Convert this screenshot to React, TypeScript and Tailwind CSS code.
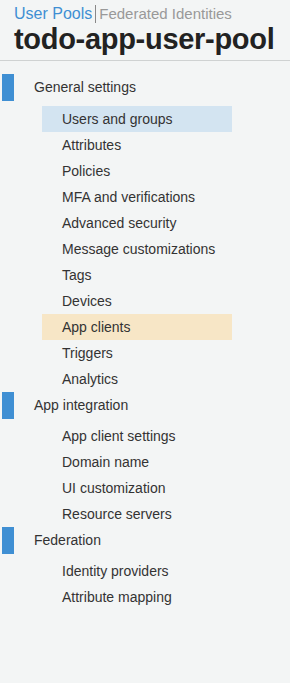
const sections = [
  {
    title: "General settings",
    items: [
      "Users and groups",
      "Attributes",
      "Policies",
      "MFA and verifications",
      "Advanced security",
      "Message customizations",
      "Tags",
      "Devices",
      "App clients",
      "Triggers",
      "Analytics",
    ],
  },
  {
    title: "App integration",
    items: ["App client settings", "Domain name", "UI customization", "Resource servers"],
  },
  {
    title: "Federation",
    items: ["Identity providers", "Attribute mapping"],
  },
]

function itemClass(label: string) {
  if (label === "Users and groups") return "bg-[#d3e4f1]"
  if (label === "App clients") return "bg-[#f7e6c6]"
  return ""
}

export default function App() {
  return (
    <div className="min-h-[683px] w-[290px] bg-[#f3f5f5] font-['Liberation_Sans',Arial,sans-serif] text-[#333]">
      {/* Header */}
      <div className="px-[14px] pt-[4px] pb-[6px] border-b border-[#cfd2d2]">
        <div className="flex items-center leading-[20px]">
          <span className="text-[16px] text-[#3f8fd3]">User Pools</span>
          <span className="mx-[3px] h-[18px] w-px bg-[#888]" />
          <span className="text-[15px] text-[#999]">Federated Identities</span>
        </div>
        <h1 className="text-[29px] font-bold leading-[30px] text-[#222] tracking-[-0.3px]">todo-app-user-pool</h1>
      </div>

      {/* Nav */}
      <nav className="pt-[13px]">
        {sections.map((s, i) => (
          <div key={s.title}>
            <div className="flex h-[27px] items-center">
              <span className="ml-[2px] h-[27px] w-[12px] bg-[#3f8fd3]" />
              <span className="ml-[20px] text-[14px]">{s.title}</span>
            </div>
            <ul className={i === 0 ? "mt-[5px]" : "mt-[4px]"}>
              {s.items.map((it) => (
                <li
                  key={it}
                  className={`ml-[42px] w-[190px] h-[26px] flex items-center pl-[20px] text-[14px] ${itemClass(it)}`}
                >
                  {it}
                </li>
              ))}
            </ul>
          </div>
        ))}
      </nav>
    </div>
  )
}
